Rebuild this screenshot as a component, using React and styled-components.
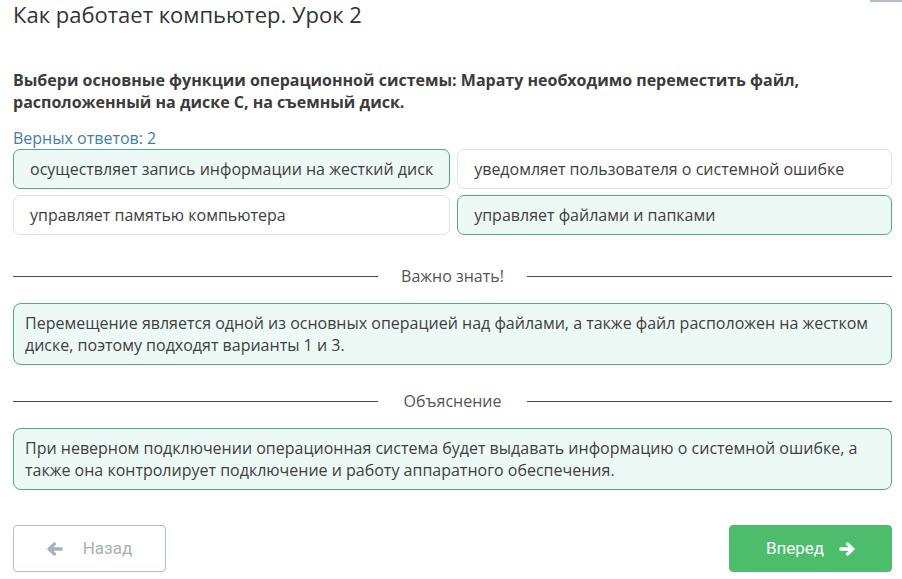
import React from 'react';
import styled, { createGlobalStyle } from 'styled-components';

const GlobalStyle = createGlobalStyle`
  html, body {
    margin: 0;
    padding: 0;
    background: #fff;
  }
  body {
    font-family: "Open Sans", "Noto Sans", sans-serif;
    color: #3f3f3f;
  }
  * {
    box-sizing: border-box;
  }
`;

const Page = styled.div`
  padding: 0 10px 0 13px;
  width: 902px;
  height: 579px;
  overflow: hidden;
`;

const Header = styled.div`
  display: flex;
  justify-content: space-between;
  align-items: flex-start;
`;

const Title = styled.h1`
  margin: 0;
  padding-top: 3px;
  font-size: 22px;
  line-height: 22px;
  font-weight: 400;
  color: #333;
`;

const CornerTab = styled.div`
  width: 32px;
  height: 2px;
  margin-right: -10px;
  background: #b4bec6;
`;

const Question = styled.p`
  margin: 44px 0 0;
  font-size: 16px;
  line-height: 22px;
  font-weight: 700;
  color: #3b3b3b;
`;

const Counter = styled.div`
  margin-top: 14px;
  font-size: 16px;
  line-height: 22px;
  color: #3f7ea6;
`;

const Options = styled.div`
  display: grid;
  grid-template-columns: 1fr 1fr;
  grid-auto-rows: 40px;
  column-gap: 7px;
  row-gap: 6px;
`;

const Option = styled.div`
  display: flex;
  align-items: center;
  padding: 0 16px;
  border-radius: 7px;
  border: 1px solid ${({ selected }) => (selected ? '#4fa88a' : '#e3e3e3')};
  background: ${({ selected }) => (selected ? '#edf9f4' : '#fff')};
  font-size: 16px;
  color: #404040;
  white-space: nowrap;
`;

const Divider = styled.div`
  display: grid;
  grid-template-columns: 1fr 149px 1fr;
  align-items: center;
  margin-top: ${({ top }) => top}px;
  font-size: 16px;
  line-height: 22px;
  color: #555;
  text-align: center;

  &::before,
  &::after {
    content: '';
    height: 1px;
    background: #4a4a4a;
  }
`;

const Note = styled.div`
  margin-top: 16px;
  padding: 8px 11px;
  border-radius: 8px;
  border: 1px solid #4fa88a;
  background: #edf9f4;
  font-size: 16px;
  line-height: 22px;
  color: #404040;
`;

const Footer = styled.div`
  display: flex;
  justify-content: space-between;
  margin-top: 35px;
`;

const NavButton = styled.button`
  display: flex;
  align-items: center;
  justify-content: center;
  gap: ${({ primary }) => (primary ? 15 : 20)}px;
  width: ${({ primary }) => (primary ? 163 : 153)}px;
  height: 47px;
  padding: 0 0 2px;
  border-radius: 4px;
  border: 1px solid ${({ primary }) => (primary ? '#4cbd6a' : '#b2bcc3')};
  background: ${({ primary }) => (primary ? '#4cbd6a' : '#fff')};
  color: ${({ primary }) => (primary ? '#fff' : '#a6b1b9')};
  font-family: Roboto, "Liberation Sans", sans-serif;
  font-size: 17px;
  cursor: pointer;
`;

const ArrowIcon = styled.svg`
  width: 16px;
  height: 14px;
  margin-top: 2px;
  fill: currentColor;
  transform: ${({ dir }) => (dir === 'right' ? 'scaleX(-1)' : 'none')};
`;

const Arrow = ({ dir }) => (
  <ArrowIcon dir={dir} viewBox="0 0 16 14">
    <path d="M6.6 0.6 L0.6 6.2 Q-0.2 7 0.6 7.8 L6.6 13.4 Q7.4 14.1 8.2 13.4 L8.9 12.7 Q9.6 11.9 8.9 11.2 L6.4 8.8 H14.6 Q15.6 8.8 15.6 7.8 V6.2 Q15.6 5.2 14.6 5.2 H6.4 L8.9 2.8 Q9.6 2.1 8.9 1.3 L8.2 0.6 Q7.4 -0.1 6.6 0.6 Z" />
  </ArrowIcon>
);

const options = [
  { text: 'осуществляет запись информации на жесткий диск', selected: true },
  { text: 'уведомляет пользователя о системной ошибке', selected: false },
  { text: 'управляет памятью компьютера', selected: false },
  { text: 'управляет файлами и папками', selected: true },
];

export default function App() {
  return (
    <>
      <GlobalStyle />
      <Page>
        <Header>
          <Title>Как работает компьютер. Урок 2</Title>
          <CornerTab />
        </Header>
        <Question>
          Выбери основные функции операционной системы: Марату необходимо переместить файл,
          расположенный на диске С, на съемный диск.
        </Question>
        <Counter>Верных ответов: 2</Counter>
        <Options>
          {options.map((o) => (
            <Option key={o.text} selected={o.selected}>
              {o.text}
            </Option>
          ))}
        </Options>
        <Divider top={30}>Важно знать!</Divider>
        <Note>
          Перемещение является одной из основных операцией над файлами, а также файл расположен на жестком
          диске, поэтому подходят варианты 1 и 3.
        </Note>
        <Divider top={25}>Объяснение</Divider>
        <Note>
          При неверном подключении операционная система будет выдавать информацию о системной ошибке, а
          также она контролирует подключение и работу аппаратного обеспечения.
        </Note>
        <Footer>
          <NavButton>
            <Arrow dir="left" />
            Назад
          </NavButton>
          <NavButton primary>
            Вперед
            <Arrow dir="right" />
          </NavButton>
        </Footer>
      </Page>
    </>
  );
}
